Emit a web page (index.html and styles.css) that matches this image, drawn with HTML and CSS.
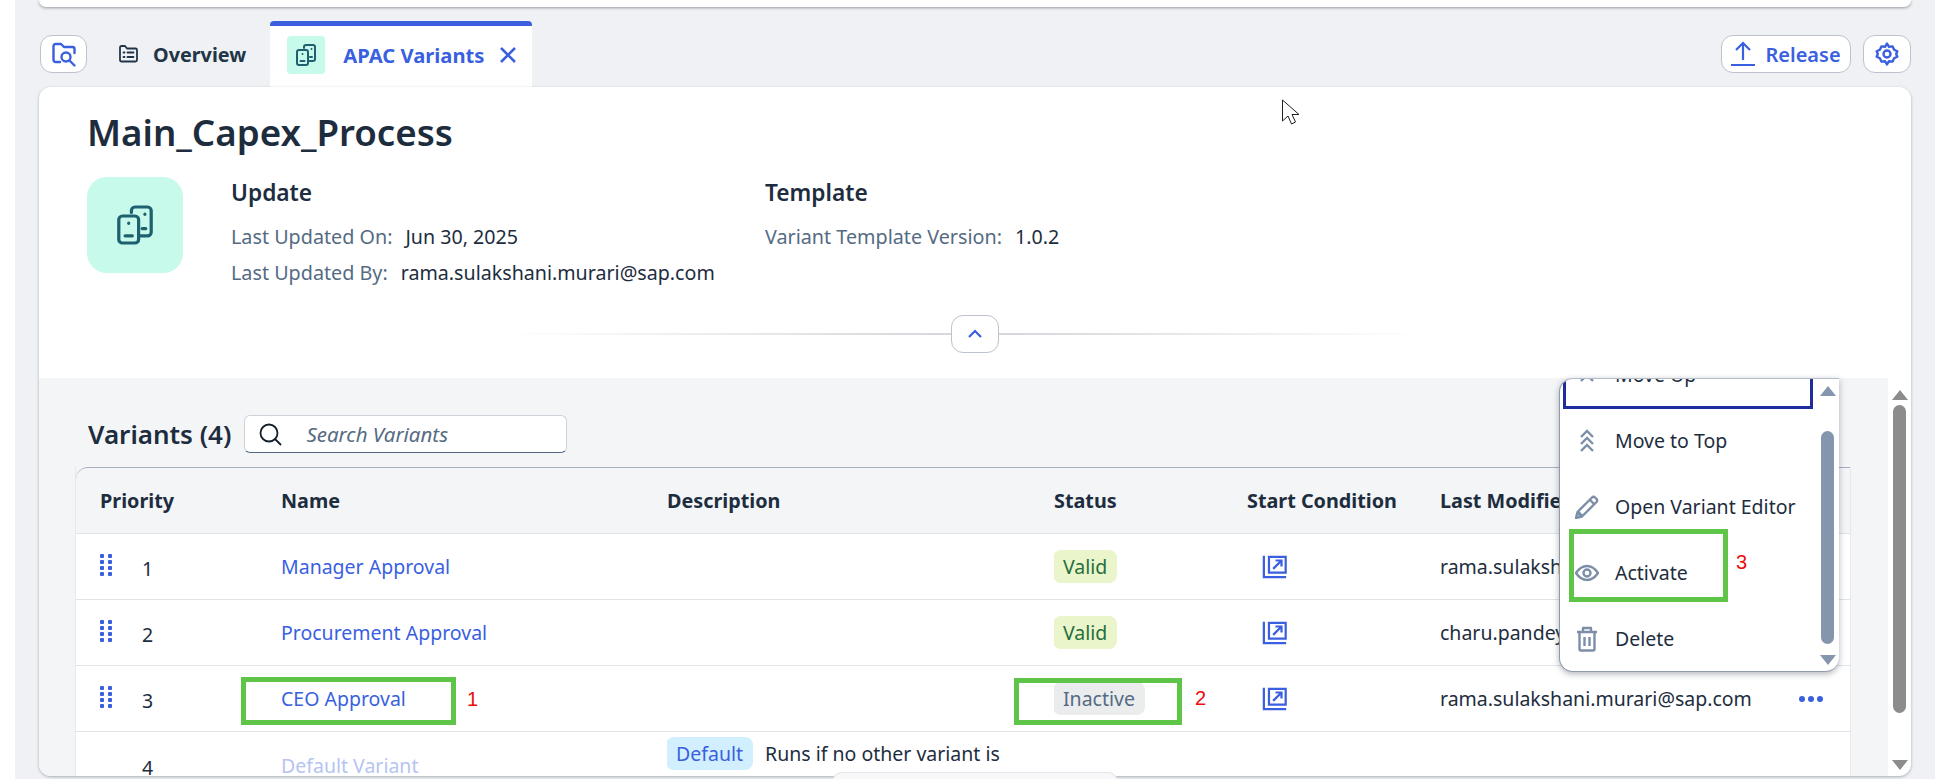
FILE: index.html
```html
<!DOCTYPE html>
<html lang="en">
<head>
    <meta charset="UTF-8">
    <meta name="viewport" content="width=device-width, initial-scale=1.0">
    <title>APAC Variants</title>
    <link rel="stylesheet" href="styles.css">
</head>
<body>
    <div class="shell">
        <div class="topbar"></div>

        <div class="tabbar">
            <button type="button" class="icon-btn search-btn">
                <svg width="28" height="28" viewBox="0 0 28 28" fill="none" stroke="#3a5fdf" stroke-width="2.4" stroke-linecap="round" stroke-linejoin="round">
                    <path d="M10 22H5.500A2 2 0 0 1 3.500 20V6a2 2 0 0 1 2-2h5.500l3 3h8.500a2 2 0 0 1 2 2v4"/>
                    <circle cx="16" cy="17" r="4.500"/>
                    <path d="M19.500 20.500l5 5"/>
                </svg>
            </button>
            <div class="tab">
                <svg width="19" height="18" viewBox="0 0 19 18" fill="none" stroke="#223548" stroke-width="1.800" stroke-linecap="round" stroke-linejoin="round">
                    <path d="M1 15V2.500A1.500 1.500 0 0 1 2.500 1h3.500l2 2.500h8.500A1.500 1.500 0 0 1 18 5v10a1.500 1.500 0 0 1-1.500 1.500h-14A1.500 1.500 0 0 1 1 15z"/>
                    <path d="M4.500 7.500h1M8.500 7.500h6M4.500 12h1M8.500 12h6"/>
                </svg>
                <span>Overview</span>
            </div>
            <div class="tab tab-active">
                <span class="tab-icon">
                    <svg width="20" height="22" viewBox="0 0 40 44" fill="none" stroke="#1f6070" stroke-width="4" stroke-linecap="round" stroke-linejoin="round">
                        <path d="M16 8V6a4 4 0 0 1 4-4h14a4 4 0 0 1 4 4v24a4 4 0 0 1-4 4h-8"/>
                        <rect x="2" y="12" width="22" height="30" rx="4"/>
                        <path d="M13 20v.1M9 34h8M31 10v.1M28 26h4"/>
                    </svg>
                </span>
                <span>APAC Variants</span>
                <svg class="tab-close" width="18" height="18" viewBox="0 0 18 18" fill="none" stroke="#3a5fdf" stroke-width="2.600">
                    <path d="M2 2l14 14M16 2L2 16"/>
                </svg>
            </div>
            <div class="tab-actions">
                <button type="button" class="release-btn">
                    <svg width="24" height="26" viewBox="0 0 24 26" fill="none" stroke="#3a5fdf" stroke-width="2.200">
                        <path d="M12 19V2M5 9l7-7 7 7M0 24h24"/>
                    </svg>
                    Release
                </button>
                <button type="button" class="icon-btn gear-btn">
                    <svg width="24" height="24" viewBox="0 0 24 24" fill="none" stroke="#3a5fdf" stroke-width="2.400" stroke-linejoin="round">
                        <path d="M12 1.500l2 3.300 3.600-.4 1.500 3.300 3.200 1.600-1.100 2.700 1.100 2.700-3.200 1.600-1.500 3.300-3.600-.4-2 3.300-2-3.300-3.600.4-1.500-3.300L1.700 14.700 2.800 12 1.700 9.300l3.200-1.600 1.500-3.300 3.600.4z"/>
                        <circle cx="12" cy="12" r="3.500"/>
                    </svg>
                </button>
            </div>
        </div>

        <div class="card">
            <div class="card-head">
                <h1>Main_Capex_Process</h1>
                <div class="head-row">
                    <div class="head-icon">
                        <svg width="36" height="44" viewBox="0 0 40 44" fill="none" stroke="#1f6070" stroke-width="3.600" stroke-linecap="round" stroke-linejoin="round">
                            <path d="M16 8V6a4 4 0 0 1 4-4h14a4 4 0 0 1 4 4v24a4 4 0 0 1-4 4h-8"/>
                            <rect x="2" y="12" width="22" height="30" rx="4"/>
                            <path d="M13 20v.1M9 34h8M31 10v.1M28 26h4"/>
                        </svg>
                    </div>
                    <div class="head-group group-update">
                        <h2>Update</h2>
                        <p><span class="label">Last Updated On:</span><span>Jun 30, 2025</span></p>
                        <p><span class="label">Last Updated By:</span><span>rama.sulakshani.murari@sap.com</span></p>
                    </div>
                    <div class="head-group">
                        <h2>Template</h2>
                        <p><span class="label">Variant Template Version:</span><span>1.0.2</span></p>
                    </div>
                </div>
                <div class="collapse">
                    <button type="button" class="collapse-btn">
                        <svg width="16" height="10" viewBox="0 0 16 10" fill="none" stroke="#3a5fdf" stroke-width="2.200">
                            <path d="M2 8l6-6 6 6"/>
                        </svg>
                    </button>
                </div>
            </div>

            <div class="card-body">
                <div class="variants">
                    <div class="toolbar">
                        <h2>Variants (4)</h2>
                        <div class="search">
                            <svg width="24" height="24" viewBox="0 0 24 24" fill="none" stroke="#131e29" stroke-width="1.800">
                                <circle cx="11" cy="11" r="8.500"/>
                                <path d="M17 17l6 6"/>
                            </svg>
                            <span>Search Variants</span>
                        </div>
                    </div>
                    <table>
                        <colgroup>
                            <col class="col-priority">
                            <col class="col-name">
                            <col class="col-desc">
                            <col class="col-status">
                            <col class="col-start">
                            <col>
                        </colgroup>
                        <thead>
                            <tr>
                                <th class="first">Priority</th>
                                <th>Name</th>
                                <th>Description</th>
                                <th>Status</th>
                                <th>Start Condition</th>
                                <th>Last Modified By</th>
                            </tr>
                        </thead>
                        <tbody>
                            <tr>
                                <td class="first"><div class="priority"><span class="grip"></span><span class="num">1</span></div></td>
                                <td><a href="#">Manager Approval</a></td>
                                <td></td>
                                <td><span class="badge valid">Valid</span></td>
                                <td><svg class="open-icon" width="26" height="26" viewBox="0 0 28 26" fill="none" stroke="#3a5fdf" stroke-width="2.400"><path d="M2 1v23h24"/><path d="M7.500 2h18v17h-18z"/><path d="M12 15l9-9M14.500 6H21v6.500"/></svg></td>
                                <td>rama.sulakshani.murari@sap.com</td>
                            </tr>
                            <tr>
                                <td class="first"><div class="priority"><span class="grip"></span><span class="num">2</span></div></td>
                                <td><a href="#">Procurement Approval</a></td>
                                <td></td>
                                <td><span class="badge valid">Valid</span></td>
                                <td><svg class="open-icon" width="26" height="26" viewBox="0 0 28 26" fill="none" stroke="#3a5fdf" stroke-width="2.400"><path d="M2 1v23h24"/><path d="M7.500 2h18v17h-18z"/><path d="M12 15l9-9M14.500 6H21v6.500"/></svg></td>
                                <td>charu.pandey@sap.com</td>
                            </tr>
                            <tr>
                                <td class="first"><div class="priority"><span class="grip"></span><span class="num">3</span></div></td>
                                <td><a href="#">CEO Approval</a></td>
                                <td></td>
                                <td><span class="badge inactive">Inactive</span></td>
                                <td><svg class="open-icon" width="26" height="26" viewBox="0 0 28 26" fill="none" stroke="#3a5fdf" stroke-width="2.400"><path d="M2 1v23h24"/><path d="M7.500 2h18v17h-18z"/><path d="M12 15l9-9M14.500 6H21v6.500"/></svg></td>
                                <td>
                                    <div class="modified">
                                        <span>rama.sulakshani.murari@sap.com</span>
                                        <span class="more"><i></i><i></i><i></i></span>
                                    </div>
                                </td>
                            </tr>
                            <tr class="row-default">
                                <td class="first"><div class="priority"><span class="grip-empty"></span><span class="num">4</span></div></td>
                                <td><a href="#" class="disabled">Default Variant</a></td>
                                <td class="desc"><span class="badge default">Default</span>Runs if no other variant is used</td>
                                <td></td>
                                <td></td>
                                <td></td>
                            </tr>
                        </tbody>
                    </table>
                </div>
                <div class="scroll-col">
                    <span class="arrow-up"></span>
                    <span class="thumb"></span>
                    <span class="arrow-down"></span>
                </div>
            </div>
        </div>
    </div>

    <div class="peek"></div>

    <div class="menu">
        <ul>
            <li class="focused">
                <svg class="menu-icon" width="24" height="24" viewBox="0 0 24 24" fill="none" stroke="#7d8fa8" stroke-width="2.400"><path d="M6 18l6-6 6 6M6 11l6-6 6 6"/></svg>
                Move Up
            </li>
            <li>
                <svg class="menu-icon" width="24" height="24" viewBox="0 0 24 24" fill="none" stroke="#7d8fa8" stroke-width="2.400"><path d="M6 8l6-6 6 6M6 15l6-6 6 6M6 22l6-6 6 6"/></svg>
                Move to Top
            </li>
            <li>
                <svg class="menu-icon" width="24" height="24" viewBox="0 0 24 24" fill="none" stroke="#7d8fa8" stroke-width="2.400" stroke-linejoin="round"><path d="M1 23l1.500-6L17 2.500a2 2 0 0 1 3 0l1.500 1.500a2 2 0 0 1 0 3L7 21.500z"/><path d="M2.500 17L7 21.500" stroke-width="3.500"/><path d="M15 5l4 4"/></svg>
                Open Variant Editor
            </li>
            <li>
                <svg class="menu-icon" width="24" height="24" viewBox="0 0 24 24" fill="none" stroke="#7d8fa8" stroke-width="2.400"><path d="M1 12c3-4.500 7-7 11-7s8 2.500 11 7c-3 4.500-7 7-11 7s-8-2.500-11-7z"/><circle cx="12" cy="12" r="3.500"/></svg>
                Activate
            </li>
            <li>
                <svg class="menu-icon" width="24" height="26" viewBox="0 0 24 26" fill="none" stroke="#7d8fa8" stroke-width="2.400" stroke-linejoin="round"><path d="M2 6h20M8 6V2h8v4M4.500 6v17a1.500 1.500 0 0 0 1.500 1.500h12a1.500 1.500 0 0 0 1.500-1.500V6M9.500 11v9M14.500 11v9"/></svg>
                Delete
            </li>
        </ul>
        <div class="menu-scroll">
            <span class="arrow-up"></span>
            <span class="thumb"></span>
            <span class="arrow-down"></span>
        </div>
    </div>

    <div class="note-box note-box-1"></div>
    <div class="note-box note-box-2"></div>
    <div class="note-box note-box-3"></div>
    <span class="note-num note-num-1">1</span>
    <span class="note-num note-num-2">2</span>
    <span class="note-num note-num-3">3</span>

    <svg class="cursor" width="19" height="28" viewBox="0 0 19 28" fill="#fff" stroke="#222" stroke-width="1">
        <path d="M1.500 1v21l5.500-5 3.500 8 4-2-3.500-7.500h7z"/>
    </svg>
</body>
</html>
```

FILE: styles.css
```css
* {
    margin: 0;
    padding: 0;
    box-sizing: border-box;
}
body {
    font-family: "Noto Sans", Arial, sans-serif;
    font-size: 19.5px;
    color: #1d2d3e;
    background-color: #fff;
    height: 779px;
    padding-left: 15px;
    overflow: hidden;
}
button {
    font-family: inherit;
    background-color: #fff;
    border: 1px solid #bcc3ce;
    border-radius: 12px;
    cursor: pointer;
}

/* Page frame */
.shell {
    height: 100%;
    background-color: #eff1f4;
    padding: 0 24px 3px;
    display: flex;
    flex-direction: column;
}
.topbar {
    height: 7px;
    margin-bottom: 14px;
    background-color: #fff;
    border-radius: 0 0 12px 12px;
    box-shadow: 0 1px 3px rgba(60, 70, 85, 0.5);
}

/* Tabs */
.tabbar {
    height: 66px;
    display: flex;
    align-items: center;
}
.icon-btn {
    width: 47px;
    height: 38px;
    display: flex;
    align-items: center;
    justify-content: center;
}
.search-btn {
    margin-left: 1px;
    margin-right: 32px;
}
.tab {
    display: flex;
    align-items: center;
    gap: 15px;
    font-size: 19.8px;
    font-weight: 700;
    color: #223548;
}
.tab-active {
    height: 66px;
    margin-left: 24px;
    padding: 0 15px 4px 17px;
    gap: 18px;
    font-size: 20.200px;
    color: #3a5fdf;
    background-color: #fff;
    border-top: 5px solid #3a5fdf;
    border-radius: 4px 4px 0 0;
}
.tab-icon {
    width: 38px;
    height: 38px;
    background-color: #c7faeb;
    border-radius: 4px;
    display: flex;
    align-items: center;
    justify-content: center;
}
.tab-close {
    margin-left: -3px;
}
.tab-actions {
    margin-left: auto;
    display: flex;
    gap: 12px;
}
.release-btn {
    width: 130px;
    height: 38px;
    display: flex;
    align-items: center;
    justify-content: center;
    gap: 10px;
    font-size: 20px;
    font-weight: 600;
    color: #3a5fdf;
}
.gear-btn {
    width: 48px;
}

/* Card */
.card {
    flex: 1;
    min-height: 0;
    background-color: #fff;
    border-radius: 12px;
    box-shadow: 0 1px 3px rgba(60, 70, 85, 0.4);
    overflow: hidden;
    display: flex;
    flex-direction: column;
}
.card-head {
    height: 291px;
    flex-shrink: 0;
    padding: 22px 48px 0;
}
h1 {
    font-size: 36.700px;
    font-weight: 600;
    line-height: 46px;
}
.head-row {
    margin-top: 22px;
    display: flex;
}
.head-icon {
    width: 96px;
    height: 96px;
    background-color: #c7faeb;
    border-radius: 20px;
    display: flex;
    align-items: center;
    justify-content: center;
}
.head-group {
    margin-left: 48px;
}
.group-update {
    width: 486px;
}
.head-group h2 {
    font-size: 22.700px;
    font-weight: 600;
    line-height: 30px;
    margin-top: 1px;
    margin-bottom: 11px;
}
.head-group p {
    line-height: 36px;
    display: flex;
    gap: 13px;
    font-size: 19.650px;
}
.label {
    color: #556b82;
    font-size: 19.750px;
}
.collapse {
    height: 38px;
    margin: 24px -48px 0;
    display: flex;
    justify-content: center;
    background: linear-gradient(90deg, transparent 25%, #d5d8dc 48%, #d5d8dc 52%, transparent 74%) no-repeat center / 100% 2px;
}
.collapse-btn {
    width: 48px;
    height: 38px;
    display: flex;
    align-items: center;
    justify-content: center;
}

/* Variants list */
.card-body {
    flex: 1;
    min-height: 0;
    display: flex;
}
.variants {
    flex: 1;
    min-width: 0;
    background-color: #f3f5f7;
    padding: 37px 37px 0 36px;
}
.toolbar {
    height: 38px;
    margin-bottom: 14px;
    padding-left: 13px;
    display: flex;
    align-items: center;
    gap: 13px;
}
.toolbar h2 {
    font-size: 26px;
    font-weight: 600;
}
.search {
    width: 323px;
    height: 38px;
    padding-left: 13px;
    display: flex;
    align-items: center;
    gap: 24px;
    background-color: #fff;
    border: 1px solid #ccd2da;
    border-bottom-color: #556b82;
    border-radius: 6px;
    font-size: 20.500px;
    font-style: italic;
    color: #556b82;
}
table {
    width: 100%;
    table-layout: fixed;
    border-collapse: separate;
    border-spacing: 0;
    border-right: 1px solid #e5e8ec;
    border-left: 1px solid #e5e8ec;
}
.col-priority { width: 205px; }
.col-name { width: 386px; }
.col-desc { width: 387px; }
.col-status { width: 193px; }
.col-start { width: 193px; }
th {
    height: 67px;
    text-align: left;
    font-size: 19.800px;
    font-weight: 700;
    background-color: #f3f5f7;
    border-top: 1px solid #a5afbd;
    border-bottom: 1px solid #e0e3e7;
}
th.first {
    border-top-left-radius: 12px;
}
td {
    height: 66px;
    background-color: #fff;
    border-bottom: 1px solid #e0e3e7;
    white-space: nowrap;
    overflow: hidden;
}
.first {
    padding-left: 24px;
}
.priority {
    display: flex;
    align-items: center;
    gap: 30px;
}
.num {
    padding-top: 4px;
}
.grip {
    width: 12px;
    height: 24px;
    margin-top: -3px;
    background-image: radial-gradient(circle, #3a5fdf 2px, transparent 2.500px);
    background-size: 8px 6px;
    background-position: -2px 0;
}
.grip-empty {
    width: 12px;
}
a {
    color: #3a5fdf;
    text-decoration: none;
}
a.disabled {
    color: #b6c4f1;
}
.badge {
    display: inline-block;
    height: 33px;
    line-height: 33px;
    margin-left: -1px;
    padding: 0 10px;
    border-radius: 8px;
}
.valid {
    background-color: #ebf5cb;
    color: #256f3a;
}
.inactive {
    background-color: #eaecee;
    color: #556b82;
}
.default {
    background-color: #d1efff;
    color: #3a5fdf;
    margin-right: 12px;
}
td.desc {
    white-space: normal;
    line-height: 28px;
    padding: 5px 40px 0 0;
}
.open-icon {
    display: block;
    margin-left: 15px;
}
.modified {
    display: flex;
    justify-content: space-between;
    padding-right: 27px;
}
.more {
    display: flex;
    align-items: center;
    gap: 3px;
}
.more i {
    width: 6px;
    height: 6px;
    border-radius: 50%;
    background-color: #3a5fdf;
}

/* Scrollbars */
.scroll-col {
    width: 23px;
    flex-shrink: 0;
    padding: 12px 0 0 4px;
    display: flex;
    flex-direction: column;
    align-items: flex-start;
}
.scroll-col .thumb {
    width: 13px;
    height: 308px;
    margin: 5px 0 0 1px;
    background-color: #8c8c8c;
    border-radius: 7px;
}
.scroll-col .arrow-up {
    border-bottom-color: #8c8c8c;
    border-width: 0 8px 10px;
}
.scroll-col .arrow-down {
    margin-top: 47px;
    border-top-color: #8c8c8c;
    border-width: 10px 8px 0;
}
.arrow-up, .arrow-down {
    display: block;
    width: 0;
    height: 0;
    border-style: solid;
    border-color: transparent;
}

/* Row menu */
.menu {
    position: absolute;
    left: 1559px;
    top: 378px;
    width: 280px;
    height: 294px;
    overflow: hidden;
    background-color: #fff;
    border: 1px solid #8e9aaa;
    border-top-color: #b4bcc7;
    border-right: 0;
    border-radius: 14px 0 14px 14px;
    box-shadow: 0 2px 6px rgba(60, 70, 85, 0.4);
}
.menu ul {
    list-style-type: none;
    margin: -36px 0 0 3px;
    width: 250px;
}
.menu li {
    height: 66px;
    padding: 0 0 3px 12px;
    display: flex;
    align-items: center;
    gap: 16px;
}
.menu li.focused {
    outline: 3px solid #1f2c9e;
    outline-offset: -3px;
}
.menu-scroll {
    position: absolute;
    right: 4px;
    top: 0;
    bottom: 0;
    width: 14px;
}
.menu-scroll .thumb {
    position: absolute;
    top: 52px;
    left: 0;
    width: 13px;
    height: 213px;
    background-color: #8496ad;
    border-radius: 7px;
}
.menu-scroll .arrow-up {
    position: absolute;
    top: 7px;
    left: -1px;
    border-bottom-color: #8496ad;
    border-width: 0 8px 10px;
}
.menu-scroll .arrow-down {
    position: absolute;
    bottom: 6px;
    left: -1px;
    border-top-color: #8496ad;
    border-width: 10px 8px 0;
}

/* Notes drawn over the screenshot */
.note-box {
    position: absolute;
    border: 5px solid #5fc548;
}
.note-box-1 { left: 241px; top: 677px; width: 215px; height: 48px; }
.note-box-2 { left: 1014px; top: 678px; width: 168px; height: 47px; }
.note-box-3 { left: 1569px; top: 529px; width: 159px; height: 73px; }
.note-num {
    position: absolute;
    font-family: "Liberation Sans", Arial, sans-serif;
    font-size: 20px;
    line-height: 24px;
    color: #ee0a0a;
}
.note-num-1 { left: 467px; top: 687px; }
.note-num-2 { left: 1195px; top: 686px; }
.note-num-3 { left: 1736px; top: 550px; }
.cursor {
    position: absolute;
    left: 1281px;
    top: 99px;
}
.peek {
    position: absolute;
    left: 832px;
    top: 772px;
    width: 286px;
    height: 10px;
    background-color: #f7f8f9;
    border: 1px solid #e4e6e9;
    border-radius: 10px 10px 0 0;
}
```
